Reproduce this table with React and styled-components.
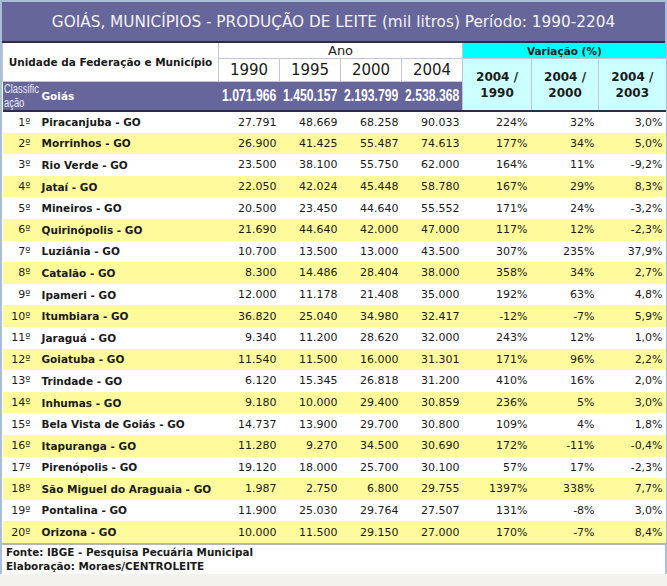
import React from "react";
import styled, { createGlobalStyle } from "styled-components";

const Global = createGlobalStyle`
  html, body { margin: 0; padding: 0; background: #f4f2ec; }
  body { font-family: "DejaVu Sans", Verdana, sans-serif; color: #1a1a1a; }
`;

const Frame = styled.div`
  width: 663px;
  background: #fff;
  border: 2px solid #a9bfd8;
  border-bottom: none;
`;

const TitleBar = styled.div`
  height: 39px;
  background: #66669a;
  border-bottom: 2px solid #2c2c44;
  display: flex;
  align-items: center;
  justify-content: center;
  color: #f2f2f6;
  font-size: 15.3px;
`;

const Table = styled.table`
  width: 663px;
  table-layout: fixed;
  border-collapse: collapse;
  font-size: 11px;
`;

const HeadCell = styled.th`
  padding: 0;
  font-weight: ${(p) => (p.$bold ? "bold" : "normal")};
  font-size: ${(p) => p.$size || 10.5}px;
  text-align: center;
  vertical-align: middle;
  background: ${(p) => p.$bg || "#fff"};
  border-left: 1px solid #c3c3da;
  border-bottom: 1px solid #c3c3da;
  color: #1a1a1a;
  line-height: ${(p) => p.$lh || "normal"};
`;

const HeadRow = styled.tr`
  height: ${(p) => p.$h}px;
`;

const TotalRow = styled.tr`
  height: 28px;
  background: #66669a;
  border-bottom: 2px solid #2c2c44;
`;

const ClassCell = styled.td`
  padding: 0 0 0 1px;
  color: #e8e8f4;
  font-family: "Liberation Sans", Arial, sans-serif;
  font-size: 12px;
  line-height: 14px;
  vertical-align: middle;
`;

const Narrow = styled.span`
  display: inline-block;
  flex: none;
  transform: scaleX(${(p) => p.$k || 0.8});
  transform-origin: ${(p) => (p.$right ? "right" : "left")} center;
  white-space: nowrap;
`;

const TotalName = styled.td`
  padding: 0 0 0 4px;
  color: #fff;
  font-weight: bold;
  font-size: 10.5px;
`;

const TotalNum = styled.td`
  padding: 0 3px 0 0;
  color: #fff;
  font-family: "Liberation Sans", Arial, sans-serif;
  font-weight: bold;
  font-size: 16px;
`;

const RightFlow = styled.div`
  display: flex;
  justify-content: flex-end;
  white-space: nowrap;
`;

const DataRow = styled.tr`
  height: 21.6px;
  background: ${(p) => (p.$alt ? "#fffb9c" : "#fff")};
`;

const RankCell = styled.td`
  padding: 0 7px 0 0;
  text-align: right;
  white-space: nowrap;
`;

const NameCell = styled.td`
  padding: 0 0 0 4px;
  font-weight: bold;
  font-size: 10.5px;
  white-space: nowrap;
`;

const NumCell = styled.td`
  padding: 0 ${(p) => p.$pr || 3}px 0 0;
  text-align: right;
  white-space: nowrap;
`;

const Footer = styled.div`
  border-top: 2px solid #b4b4b4;
  padding: 0 0 0 4px;
  font-size: 10.4px;
  font-weight: bold;
  line-height: 14.5px;
  color: #1a1a1a;
`;

const rows = [
  ["Piracanjuba", "27.791", "48.669", "68.258", "90.033", "224%", "32%", "3,0%"],
  ["Morrinhos", "26.900", "41.425", "55.487", "74.613", "177%", "34%", "5,0%"],
  ["Rio Verde", "23.500", "38.100", "55.750", "62.000", "164%", "11%", "-9,2%"],
  ["Jataí", "22.050", "42.024", "45.448", "58.780", "167%", "29%", "8,3%"],
  ["Mineiros", "20.500", "23.450", "44.640", "55.552", "171%", "24%", "-3,2%"],
  ["Quirinópolis", "21.690", "44.640", "42.000", "47.000", "117%", "12%", "-2,3%"],
  ["Luziânia", "10.700", "13.500", "13.000", "43.500", "307%", "235%", "37,9%"],
  ["Catalão", "8.300", "14.486", "28.404", "38.000", "358%", "34%", "2,7%"],
  ["Ipameri", "12.000", "11.178", "21.408", "35.000", "192%", "63%", "4,8%"],
  ["Itumbiara", "36.820", "25.040", "34.980", "32.417", "-12%", "-7%", "5,9%"],
  ["Jaraguá", "9.340", "11.200", "28.620", "32.000", "243%", "12%", "1,0%"],
  ["Goiatuba", "11.540", "11.500", "16.000", "31.301", "171%", "96%", "2,2%"],
  ["Trindade", "6.120", "15.345", "26.818", "31.200", "410%", "16%", "2,0%"],
  ["Inhumas", "9.180", "10.000", "29.400", "30.859", "236%", "5%", "3,0%"],
  ["Bela Vista de Goiás", "14.737", "13.900", "29.700", "30.800", "109%", "4%", "1,8%"],
  ["Itapuranga", "11.280", "9.270", "34.500", "30.690", "172%", "-11%", "-0,4%"],
  ["Pirenópolis", "19.120", "18.000", "25.700", "30.100", "57%", "17%", "-2,3%"],
  ["São Miguel do Araguaia", "1.987", "2.750", "6.800", "29.755", "1397%", "338%", "7,7%"],
  ["Pontalina", "11.900", "25.030", "29.764", "27.507", "131%", "-8%", "3,0%"],
  ["Orizona", "10.000", "11.500", "29.150", "27.000", "170%", "-7%", "8,4%"],
];

const widths = [35, 181, 61, 61, 61, 61, 69, 67, 67];
const years = ["1990", "1995", "2000", "2004"];
const vars = ["1990", "2000", "2003"];
const totals = ["1.071.966", "1.450.157", "2.193.799", "2.538.368"];

export default function App() {
  return (
    <>
      <Global />
      <Frame>
        <TitleBar>GOIÁS, MUNICÍPIOS - PRODUÇÃO DE LEITE (mil litros) Período: 1990-2204</TitleBar>
        <Table>
          <colgroup>
            {widths.map((w, i) => (
              <col key={i} style={{ width: w }} />
            ))}
          </colgroup>
          <thead>
            <HeadRow $h={15}>
              <HeadCell colSpan={2} rowSpan={2} $bold>
                Unidade da Federação e Município
              </HeadCell>
              <HeadCell colSpan={4} $size={13}>Ano</HeadCell>
              <HeadCell colSpan={3} $bold $bg="#00ffff">Variação (%)</HeadCell>
            </HeadRow>
            <HeadRow $h={23}>
              {years.map((y) => (
                <HeadCell key={y} $size={15}>{y}</HeadCell>
              ))}
              {vars.map((v) => (
                <HeadCell key={v} rowSpan={2} $bold $size={12} $lh="16px" $bg="#ccffff">
                  2004 /<br />
                  {v}
                </HeadCell>
              ))}
            </HeadRow>
            <TotalRow>
              <ClassCell>
                <Narrow $k={0.78}>Classific</Narrow>
                <br />
                <Narrow $k={0.78}>ação</Narrow>
              </ClassCell>
              <TotalName>Goiás</TotalName>
              {totals.map((t) => (
                <TotalNum key={t}>
                  <RightFlow>
                    <Narrow $right $k={0.76}>{t}</Narrow>
                  </RightFlow>
                </TotalNum>
              ))}
            </TotalRow>
          </thead>
          <tbody>
            {rows.map((r, i) => (
              <DataRow key={r[0]} $alt={i % 2 === 1}>
                <RankCell>{i + 1}º</RankCell>
                <NameCell>{r[0]} - GO</NameCell>
                <NumCell>{r[1]}</NumCell>
                <NumCell>{r[2]}</NumCell>
                <NumCell>{r[3]}</NumCell>
                <NumCell>{r[4]}</NumCell>
                <NumCell $pr={4}>{r[5]}</NumCell>
                <NumCell $pr={4}>{r[6]}</NumCell>
                <NumCell $pr={3}>{r[7]}</NumCell>
              </DataRow>
            ))}
          </tbody>
        </Table>
        <Footer>
          Fonte: IBGE - Pesquisa Pecuária Municipal
          <br />
          Elaboração: Moraes/CENTROLEITE
        </Footer>
      </Frame>
    </>
  );
}
